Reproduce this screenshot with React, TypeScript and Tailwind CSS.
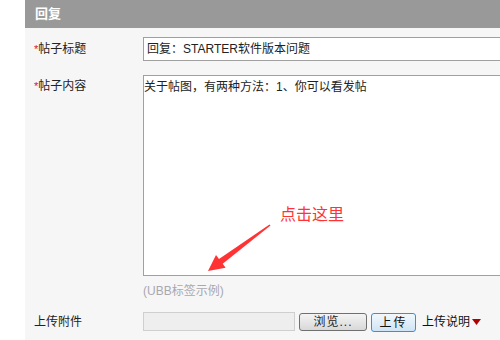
import React from 'react';

const font = { fontFamily: '"Liberation Sans", "Noto Sans CJK SC", sans-serif' };

function Label({ text, required }: { text: string; required?: boolean }) {
  return (
    <div className="pl-[9px] text-[12px] text-[#222] leading-none">
      {required && <span className="text-[#d0103a] text-[11px]">*</span>}
      {text}
    </div>
  );
}

export default function App() {
  return (
    <div className="w-[500px] h-[340px] flex bg-white relative overflow-hidden" style={font}>
      <div className="w-[25px] shrink-0 bg-white" />
      <div className="flex-1 bg-[#f6f6f6] overflow-hidden">
        {/* header */}
        <div className="h-[28px] bg-[#999999] flex items-center pl-[10px] text-white text-[13px] font-bold">
          回复
        </div>

        <div className="grid grid-cols-[118px_1fr] pt-[9px]">
          {/* title row */}
          <div className="h-[24px] flex items-center">
            <Label text="帖子标题" required />
          </div>
          <div className="h-[24px] w-[380px] border border-[#a0a0a0] bg-white flex items-center pl-[3px] text-[12px] text-[#222]">
            回复：STARTER软件版本问题
          </div>

          {/* content row */}
          <div className="pt-[19px]">
            <Label text="帖子内容" required />
          </div>
          <div className="pt-[14px]">
            <div className="h-[201px] w-[380px] border border-[#a0a0a0] bg-white pt-[5px] text-[12px] text-[#222] leading-none">
              关于帖图，有两种方法：1、你可以看发帖
            </div>
            <div className="h-[30px] flex items-center text-[12px] text-[#a8a8b0]">(UBB标签示例)</div>
          </div>

          {/* upload row */}
          <div className="pt-[10px] h-[34px]">
            <Label text="上传附件" />
          </div>
          <div className="pt-[6px] flex items-start gap-[4px] h-[34px]">
            <div className="w-[152px] h-[19px] bg-[#eeeeee] border border-[#cfcfcf]" />
            <div className="mt-[1px] w-[68px] h-[18px] rounded-[3px] border border-[#707070] bg-gradient-to-b from-[#f4f4f4] to-[#d8d8d8] flex items-center justify-center text-[12px] text-[#222] tracking-[1px]">
              浏览...
            </div>
            <div className="mt-[1px] w-[45px] h-[19px] rounded-[3px] border border-[#3c8fd0] bg-gradient-to-b from-[#f2f8fc] to-[#cfe4f4] flex items-center justify-center text-[12px] text-[#111] tracking-[2px]">
              上传
            </div>
            <div className="h-[20px] flex items-center text-[12px] text-[#111] ml-[2px]">
              上传说明
              <svg width="9" height="6" viewBox="0 0 9 6" className="ml-[2px]">
                <polygon points="0,0 9,0 4.5,6" fill="#b00000" />
              </svg>
            </div>
          </div>
        </div>
      </div>

      {/* annotation */}
      <div className="absolute left-[280px] top-[207px] text-[16px] leading-none text-[#ff3333]">点击这里</div>
      <svg className="absolute left-0 top-0 pointer-events-none" width="500" height="340">
        <polygon
          points="208,271 216,255 219,259 269.5,224.6 270.5,225.4 222.7,263.8 225.6,267.8"
          fill="#ff3333"
        />
      </svg>
    </div>
  );
}
